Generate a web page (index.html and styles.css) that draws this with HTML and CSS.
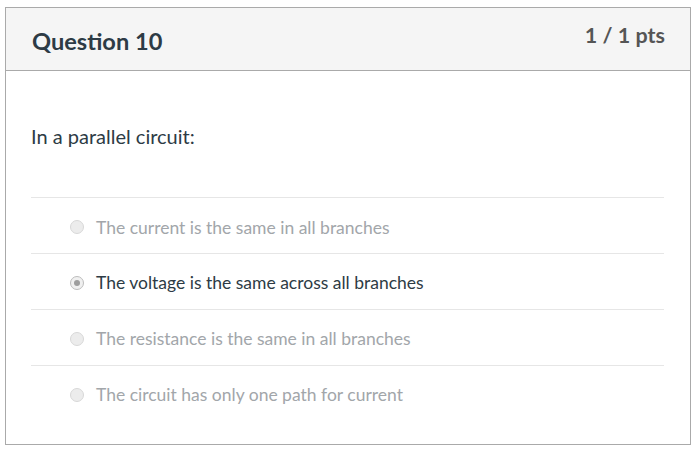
FILE: index.html
```html
<!DOCTYPE html>
<html>
<head>
<meta charset="utf-8">
<link rel="stylesheet" href="styles.css">
</head>
<body>
<div class="question">
  <div class="q-header">
    <h2 class="q-title">Question 10</h2>
    <div class="q-pts">1 / 1 pts</div>
  </div>
  <div class="q-body">
    <p class="q-text">In a parallel circuit:</p>
    <div class="answers">
      <div class="answer"><span class="radio"></span><span class="label">The current is the same in all branches</span></div>
      <div class="answer selected"><span class="radio"></span><span class="label">The voltage is the same across all branches</span></div>
      <div class="answer"><span class="radio"></span><span class="label">The resistance is the same in all branches</span></div>
      <div class="answer"><span class="radio"></span><span class="label">The circuit has only one path for current</span></div>
    </div>
  </div>
</div>
</body>
</html>
```
FILE: styles.css
```css
html, body {
  margin: 0;
  padding: 0;
  background: #fff;
}
body {
  padding: 7px 0 0 5px;
  font-family: Lato, "Open Sans", sans-serif;
}
.question {
  width: 684px;
  height: 436px;
  border: 1px solid #aaaaaa;
  box-sizing: content-box;
}
.q-header {
  height: 62px;
  background: #f5f5f5;
  border-bottom: 1px solid #aaaaaa;
  display: flex;
  justify-content: space-between;
  align-items: flex-start;
  padding: 0 25px 0 26px;
}
.q-title {
  margin: 0;
  padding-top: 19px;
  font-size: 23.6px;
  font-weight: 700;
  color: #2d3b45;
  line-height: 28px;
}
.q-pts {
  padding-top: 14px;
  font-size: 21.5px;
  font-weight: 700;
  color: #555555;
  line-height: 26px;
}
.q-body {
  padding: 0 26px 0 25px;
}
.q-text {
  margin: 0;
  padding-top: 53px;
  height: 73px;
  font-size: 20px;
  line-height: 24px;
  color: #2d3b45;
}
.answers {
  display: flex;
  flex-direction: column;
}
.answer {
  border-top: 1px solid #e6e6e6;
  height: 53px;
  padding-top: 2px;
  display: flex;
  align-items: center;
  padding-left: 39px;
  gap: 12px;
  font-size: 17.5px;
  color: #a2a6aa;
}
.answer:first-child {
  padding-top: 3px;
  height: 52px;
}
.radio {
  width: 12px;
  height: 12px;
  border-radius: 50%;
  background: #ececec;
  border: 1px solid #d8d8d8;
  flex: none;
  display: flex;
  align-items: center;
  justify-content: center;
}
.selected {
  color: #2d3b45;
}
.selected .radio {
  background: #f0f0f0;
  border-color: #bdbdbd;
}
.selected .radio::after {
  content: "";
  width: 6px;
  height: 6px;
  border-radius: 50%;
  background: #9e9e9e;
}
```
